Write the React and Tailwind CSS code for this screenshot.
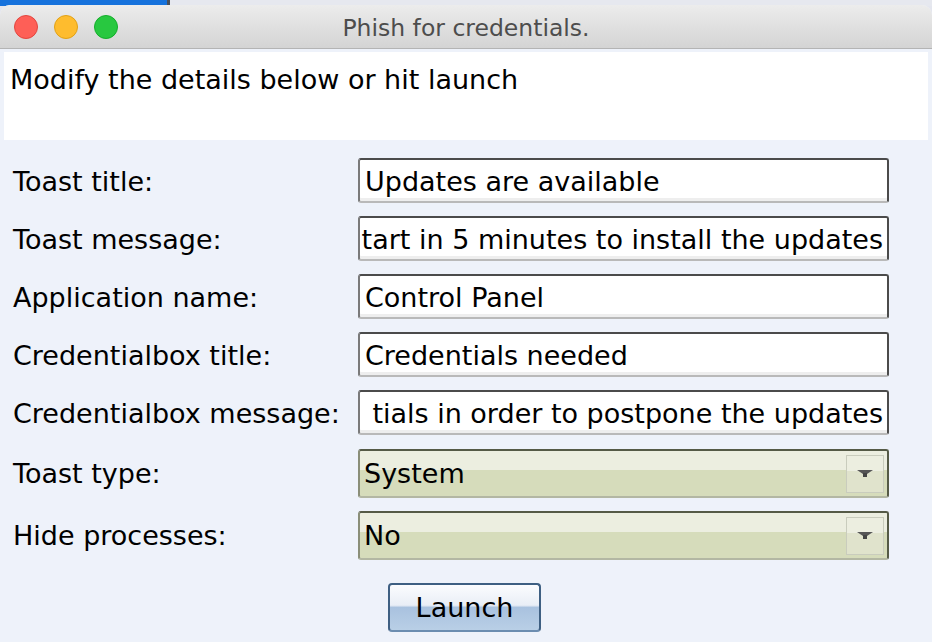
import React from "react";

const fields = [
  { label: "Toast title:", value: "Updates are available" },
  { label: "Toast message:", value: "tart in 5 minutes to install the updates", clip: true },
  { label: "Application name:", value: "Control Panel" },
  { label: "Credentialbox title:", value: "Credentials needed" },
  { label: "Credentialbox message:", value: "tials in order to postpone the updates", clip: true },
];

const combos = [
  { label: "Toast type:", value: "System" },
  { label: "Hide processes:", value: "No" },
];

const TextField = ({ value, clip }) => (
  <div className={`w-[531px] h-[45px] rounded-[3px] border-2 border-[#4b4b4b] border-b-[#b9b9b9] border-l-[#7a7a7a] bg-white shadow-[inset_0_-3px_0_#eeeeee] flex items-center overflow-hidden ${clip ? "justify-end pr-[4px]" : "px-[5px]"}`}>
    <span className="shrink-0 whitespace-nowrap pt-[3px]">{value}</span>
  </div>
);

const Combo = ({ value }) => (
  <div className="w-[531px] h-[49px] rounded-[3px] border-2 border-[#555a46] border-b-[#b3b7a3] border-l-[#8a8e78] bg-[linear-gradient(#eceee0_0%,#eceee0_42%,#d6dcbb_42%,#d6dcbb_100%)] flex items-center">
    <span className="flex-1 px-[4px] pt-[2px]">{value}</span>
    <div className="w-[38px] h-[38px] mr-[3px] border border-[#c9ccbd] bg-[linear-gradient(#eceee0_0%,#eceee0_42%,#e0e3cc_42%,#e0e3cc_100%)] flex items-center justify-center">
      <svg width="16" height="8" viewBox="0 0 16 8">
        <path d="M0 0H16L10 4H6Z" fill="#555" />
        <rect x="6" y="3" width="4" height="4" fill="#444" />
      </svg>
    </div>
  </div>
);

export default function App() {
  return (
    <div className="w-[932px] h-[642px] bg-[#e4e6ee] relative overflow-hidden" style={{ fontFamily: '"DejaVu Sans", sans-serif' }}>
      {/* desktop strip behind window */}
      <div className="flex h-[6px]">
        <div className="w-[167px] bg-[#1672dc]" />
        <div className="w-[3px] bg-[#4a4f58]" />
        <div className="flex-1 bg-[#e6e8ef]" />
      </div>

      <div className="absolute top-[5px] left-0 right-0 bottom-0 rounded-t-[10px] overflow-hidden bg-[#eef2fa] flex flex-col">
        {/* titlebar */}
        <div className="h-[44px] shrink-0 relative bg-[linear-gradient(#ececec,#d4d4d4)] border-b border-[#b4b4b4] flex items-center justify-center">
          <div className="absolute left-[14px] top-[10px] flex gap-[16px]">
            <div className="w-[24px] h-[24px] rounded-full bg-[#fe5f57] border border-[#e2463f]" />
            <div className="w-[24px] h-[24px] rounded-full bg-[#febc2e] border border-[#e1a116]" />
            <div className="w-[24px] h-[24px] rounded-full bg-[#28c840] border border-[#14ae2b]" />
          </div>
          <span className="text-[23.5px] text-[#4d4d4d] pt-[4px]">Phish for credentials.</span>
        </div>

        {/* message area */}
        <div className="mx-[4px] mt-[3px] h-[88px] bg-white px-[6px] pt-[11px] text-[27px] text-black leading-[34px]">
          Modify the details below or hit launch
        </div>

        {/* form */}
        <div className="flex flex-col pl-[13px] pt-[18px] text-[27px] text-black">
          {fields.map((f) => (
            <div key={f.label} className="flex items-center h-[45px] mb-[13px]">
              <span className="w-[345px] whitespace-nowrap pt-[3px]">{f.label}</span>
              <TextField value={f.value} clip={f.clip} />
            </div>
          ))}
          <div className="h-[1px]" />
          {combos.map((c) => (
            <div key={c.label} className="flex items-center h-[49px] mb-[13px]">
              <span className="w-[345px] whitespace-nowrap pt-[2px]">{c.label}</span>
              <Combo value={c.value} />
            </div>
          ))}
        </div>

        <div className="flex justify-center pr-[3px] mt-[10px]">
          <button className="w-[153px] h-[49px] rounded-[4px] border-2 border-[#3e5f82] border-b-[#6c8db0] bg-[linear-gradient(#fbfcfe_0%,#e9eef6_45%,#a9c2df_50%,#b9cfe6_100%)] text-[27px] text-black pt-[2px]">
            Launch
          </button>
        </div>
      </div>
    </div>
  );
}
